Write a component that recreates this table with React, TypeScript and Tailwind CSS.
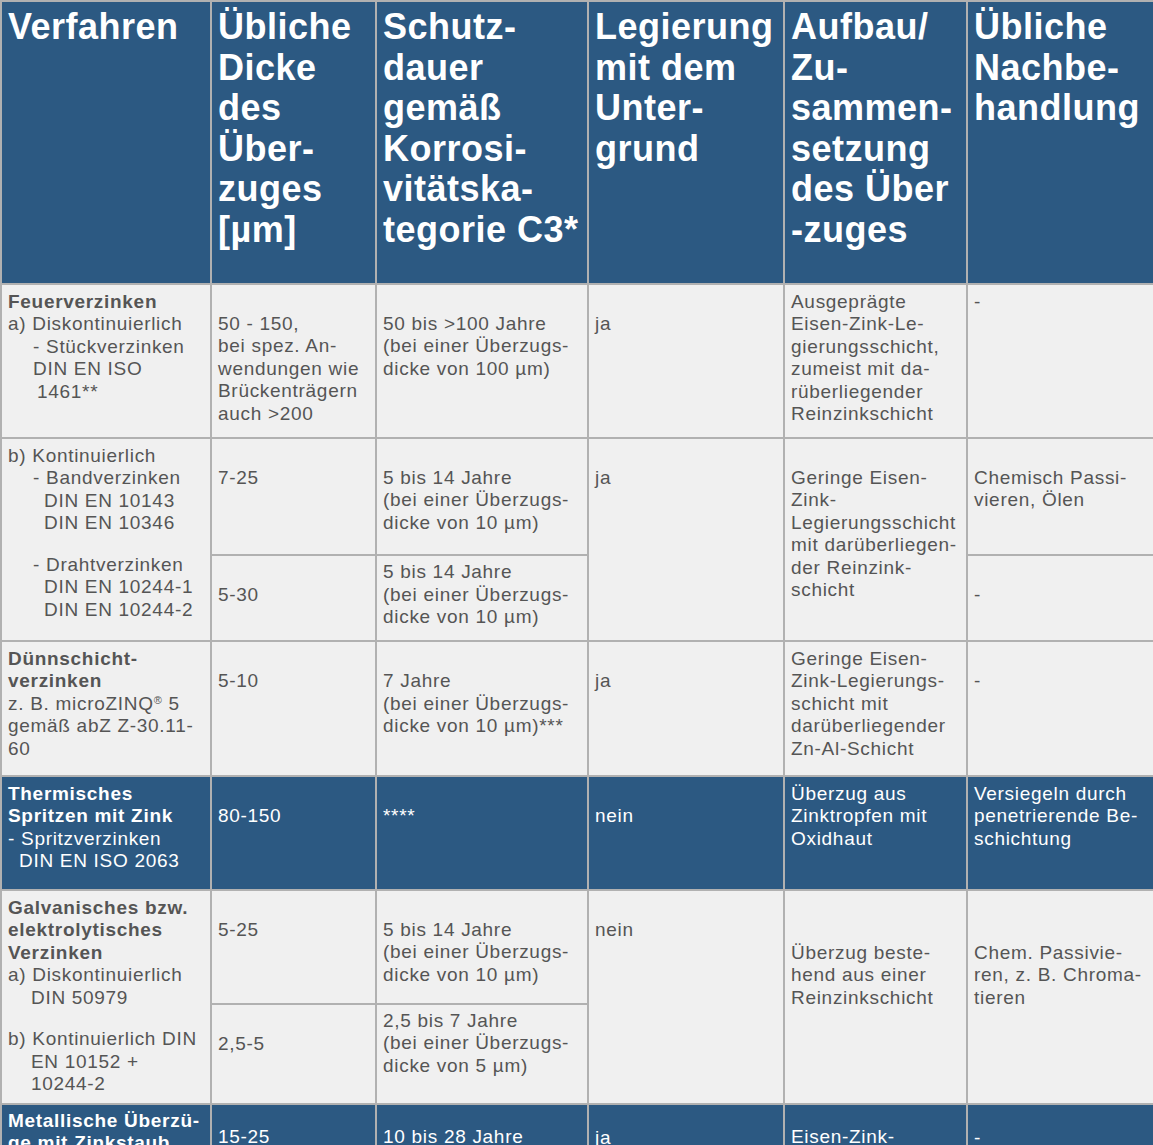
import React from "react";

type CellProps = {
  blue?: boolean;
  span?: boolean;
  pt?: string;
  children?: React.ReactNode;
};

// one table cell: light grey body cell or dark blue highlight cell
const Cell = ({ blue, span, pt = "pt-[5.5px]", children }: CellProps) => (
  <div
    className={`${blue ? "bg-[#2c5982] text-white" : "bg-[#f0f0f0] text-[#555555]"} ${
      span ? "row-span-2" : ""
    } ${pt} pl-[6px] pr-[2px] text-[19px] leading-[22.5px] tracking-[0.7px] whitespace-nowrap overflow-hidden`}
  >
    {children}
  </div>
);

const B = ({ children }: { children: React.ReactNode }) => <div className="font-bold">{children}</div>;

const Head = ({ lines }: { lines: string[] }) => (
  <div className="bg-[#2c5982] text-white font-bold text-[36px] leading-[40.5px] tracking-[0.5px] pt-[5px] pl-[6px] whitespace-nowrap overflow-hidden">
    {lines.map((l, i) => (
      <div key={i}>{l}</div>
    ))}
  </div>
);

const Years = ({ years, dicke }: { years: string; dicke: string }) => (
  <>
    <div>{years}</div>
    <div>(bei einer Überzugs-</div>
    <div>{dicke}</div>
  </>
);

export default function App() {
  return (
    <div className="w-[1153px] h-[1145px] overflow-hidden bg-[#b1b1b1] pt-[2px] pl-[2px] font-['Liberation_Sans',Arial,sans-serif]">
      <div className="grid grid-cols-[208px_163px_210px_194px_181px_185px] grid-rows-[281px_152px_115px_84px_133px_112px_112px_98px_150px] gap-[2px]">
        {/* header */}
        <Head lines={["Verfahren"]} />
        <Head lines={["Übliche", "Dicke", "des", "Über-", "zuges", "[µm]"]} />
        <Head lines={["Schutz-", "dauer", "gemäß", "Korrosi-", "vitätska-", "tegorie C3*"]} />
        <Head lines={["Legierung", "mit dem", "Unter-", "grund"]} />
        <Head lines={["Aufbau/", "Zu-", "sammen-", "setzung", "des Über", "-zuges"]} />
        <Head lines={["Übliche", "Nachbe-", "handlung"]} />

        {/* Feuerverzinken a) */}
        <Cell>
          <B>Feuerverzinken</B>
          <div>a) Diskontinuierlich</div>
          <div className="pl-[25px]">- Stückverzinken</div>
          <div className="pl-[25px]">DIN EN ISO</div>
          <div className="pl-[29px]">1461**</div>
        </Cell>
        <Cell pt="pt-[27.5px]">
          <div>50 - 150,</div>
          <div>bei spez. An-</div>
          <div>wendungen wie</div>
          <div>Brückenträgern</div>
          <div>auch &gt;200</div>
        </Cell>
        <Cell pt="pt-[27.5px]">
          <Years years="50 bis >100 Jahre" dicke="dicke von 100 µm)" />
        </Cell>
        <Cell pt="pt-[27.5px]">ja</Cell>
        <Cell>
          <div>Ausgeprägte</div>
          <div>Eisen-Zink-Le-</div>
          <div>gierungsschicht,</div>
          <div>zumeist mit da-</div>
          <div>rüberliegender</div>
          <div>Reinzinkschicht</div>
        </Cell>
        <Cell>-</Cell>

        {/* Feuerverzinken b) */}
        <Cell span>
          <div>b) Kontinuierlich</div>
          <div className="pl-[25px]">- Bandverzinken</div>
          <div className="pl-[36px]">DIN EN 10143</div>
          <div className="pl-[36px]">DIN EN 10346</div>
          <div className="pl-[25px] mt-[19px]">- Drahtverzinken</div>
          <div className="pl-[36px]">DIN EN 10244-1</div>
          <div className="pl-[36px]">DIN EN 10244-2</div>
        </Cell>
        <Cell pt="pt-[27.5px]">7-25</Cell>
        <Cell pt="pt-[27.5px]">
          <Years years="5 bis 14 Jahre" dicke="dicke von 10 µm)" />
        </Cell>
        <Cell span pt="pt-[27.5px]">ja</Cell>
        <Cell span pt="pt-[27.5px]">
          <div>Geringe Eisen-</div>
          <div>Zink-</div>
          <div>Legierungsschicht</div>
          <div>mit darüberliegen-</div>
          <div>der Reinzink-</div>
          <div>schicht</div>
        </Cell>
        <Cell pt="pt-[27.5px]">
          <div>Chemisch Passi-</div>
          <div>vieren, Ölen</div>
        </Cell>
        <Cell pt="pt-[27.5px]">5-30</Cell>
        <Cell pt="pt-[5px]">
          <Years years="5 bis 14 Jahre" dicke="dicke von 10 µm)" />
        </Cell>
        <Cell pt="pt-[27.5px]">-</Cell>

        {/* Dünnschichtverzinken */}
        <Cell>
          <B>Dünnschicht-</B>
          <B>verzinken</B>
          <div>
            z. B. microZINQ<sup className="text-[11px]">®</sup> 5
          </div>
          <div>gemäß abZ Z-30.11-</div>
          <div>60</div>
        </Cell>
        <Cell pt="pt-[28px]">5-10</Cell>
        <Cell pt="pt-[28px]">
          <Years years="7 Jahre" dicke="dicke von 10 µm)***" />
        </Cell>
        <Cell pt="pt-[28px]">ja</Cell>
        <Cell>
          <div>Geringe Eisen-</div>
          <div>Zink-Legierungs-</div>
          <div>schicht mit</div>
          <div>darüberliegender</div>
          <div>Zn-Al-Schicht</div>
        </Cell>
        <Cell pt="pt-[28px]">-</Cell>

        {/* Thermisches Spritzen */}
        <Cell blue>
          <B>Thermisches</B>
          <B>Spritzen mit Zink</B>
          <div>- Spritzverzinken</div>
          <div className="pl-[11px]">DIN EN ISO 2063</div>
        </Cell>
        <Cell blue pt="pt-[27.5px]">80-150</Cell>
        <Cell blue pt="pt-[27.5px]">****</Cell>
        <Cell blue pt="pt-[27.5px]">nein</Cell>
        <Cell blue>
          <div>Überzug aus</div>
          <div>Zinktropfen mit</div>
          <div>Oxidhaut</div>
        </Cell>
        <Cell blue>
          <div>Versiegeln durch</div>
          <div>penetrierende Be-</div>
          <div>schichtung</div>
        </Cell>

        {/* Galvanisches Verzinken */}
        <Cell span>
          <B>Galvanisches bzw.</B>
          <B>elektrolytisches</B>
          <B>Verzinken</B>
          <div>a) Diskontinuierlich</div>
          <div className="pl-[23px]">DIN 50979</div>
          <div className="mt-[19px]">b) Kontinuierlich DIN</div>
          <div className="pl-[23px]">EN 10152 +</div>
          <div className="pl-[23px]">10244-2</div>
        </Cell>
        <Cell pt="pt-[27.5px]">5-25</Cell>
        <Cell pt="pt-[27.5px]">
          <Years years="5 bis 14 Jahre" dicke="dicke von 10 µm)" />
        </Cell>
        <Cell span pt="pt-[27.5px]">nein</Cell>
        <Cell span pt="pt-[50.5px]">
          <div>Überzug beste-</div>
          <div>hend aus einer</div>
          <div>Reinzinkschicht</div>
        </Cell>
        <Cell span pt="pt-[50.5px]">
          <div>Chem. Passivie-</div>
          <div>ren, z. B. Chroma-</div>
          <div>tieren</div>
        </Cell>
        <Cell pt="pt-[27.5px]">2,5-5</Cell>
        <Cell pt="pt-[4.5px]">
          <Years years="2,5 bis 7 Jahre" dicke="dicke von 5 µm)" />
        </Cell>

        {/* Metallische Überzüge */}
        <Cell blue pt="pt-[4.5px]">
          <B>Metallische Überzü-</B>
          <B>ge mit Zinkstaub</B>
        </Cell>
        <Cell blue pt="pt-[20.5px]">15-25</Cell>
        <Cell blue pt="pt-[20.5px]">10 bis 28 Jahre</Cell>
        <Cell blue pt="pt-[22px]">ja</Cell>
        <Cell blue pt="pt-[20.5px]">Eisen-Zink-</Cell>
        <Cell blue pt="pt-[22px]">-</Cell>
      </div>
    </div>
  );
}
